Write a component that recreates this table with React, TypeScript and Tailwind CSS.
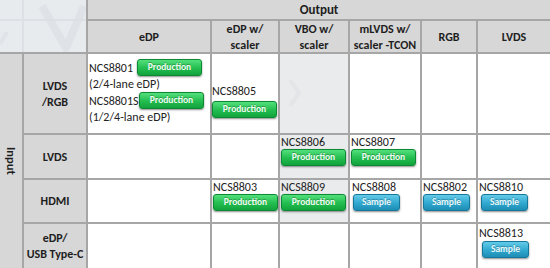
import type { ReactNode } from 'react';

const FONT = { fontFamily: "Carlito, 'Liberation Sans', Arial, sans-serif" };

function Badge({ kind, className = '' }: { kind: 'prod' | 'sample'; className?: string }) {
  const isProd = kind === 'prod';
  return (
    <span
      className={`flex items-center justify-center h-[17px] rounded-[3px] border text-[9.5px] font-bold shadow-[0_1px_2px_rgba(0,0,0,0.45)] [text-shadow:0_-1px_0_rgba(0,0,0,0.25)]
        ${isProd
          ? 'w-[65px] border-[#0b8a33] bg-gradient-to-b from-[#52e07c] via-[#25c052] to-[#12a33d] text-[#f0fdf1]'
          : 'w-[47px] border-[#15789a] bg-gradient-to-b from-[#62cbe8] via-[#33abd2] to-[#1d8db4] text-[#e8f7fb]'
        } ${className}`}
    >
      {isProd ? 'Production' : 'Sample'}
    </span>
  );
}

function Part({ name, kind, pad = 'pl-[1px]', badgePad = '' }: { name: string; kind: 'prod' | 'sample'; pad?: string; badgePad?: string }) {
  return (
    <div className={`flex flex-col ${pad}`}>
      <span className="h-[14px] leading-[14px] text-[12px] text-[#222]">{name}</span>
      <Badge kind={kind} className={badgePad} />
    </div>
  );
}

function Head({ children, className = '' }: { children: ReactNode; className?: string }) {
  return (
    <div className={`bg-[#d7d7d7] flex flex-col items-center justify-center text-center font-bold text-[12px] leading-[16px] text-[#1e1e1e] ${className}`}>
      {children}
    </div>
  );
}

export default function App() {
  return (
    <div className="w-[550px] h-[268px] bg-white overflow-hidden" style={FONT}>
      <div className="grid w-[550px] h-[268px] gap-[2px] bg-[#a6a6a6] grid-cols-[22px_62px_122px_66px_68px_70px_54px_72px] grid-rows-[19px_31px_79px_43px_42px_44px]">
        {/* corner */}
        <div className="relative col-span-2 row-span-2 grid gap-[2px] bg-[#dde1e5] grid-cols-[22px_62px] grid-rows-[19px_31px]">
          <div className="bg-[#e8ebee]" />
          <div className="bg-[#e8ebee]" />
          <div className="bg-[#e8ebee]" />
          <div className="bg-[#e8ebee]" />
          <svg className="absolute inset-0" width="86" height="52" viewBox="0 0 86 52">
            <polyline points="42,6 66,48 84,6" fill="none" stroke="#dce0e6" strokeWidth="8" strokeLinejoin="round" opacity="0.7" />
            <polyline points="0,44 7,32" fill="none" stroke="#e0e4e8" strokeWidth="4" />
          </svg>
        </div>

        <Head className="col-span-6 text-[13px]">Output</Head>

        <Head>eDP</Head>
        <Head><span>eDP w/</span><span>scaler</span></Head>
        <Head><span>VBO w/</span><span>scaler</span></Head>
        <Head className="text-[11.5px]"><span>mLVDS w/</span><span>scaler -TCON</span></Head>
        <Head>RGB</Head>
        <Head>LVDS</Head>

        {/* Input label */}
        <div className="row-span-4 row-start-3 col-start-1 bg-[#d7d7d7] flex items-center justify-center">
          <span className="[writing-mode:vertical-rl] font-bold text-[12.5px] text-[#1e1e1e]">Input</span>
        </div>

        {/* LVDS /RGB */}
        <Head><span>LVDS</span><span>/RGB</span></Head>
        <div className="bg-white flex flex-col pl-[1px] pt-[5px] text-[12px] text-[#222]">
          <div className="flex items-center h-[17px]">
            <span className="w-[48px]">NCS8801</span>
            <Badge kind="prod" />
          </div>
          <div className="h-[16px] leading-[16px]">(2/4-lane eDP)</div>
          <div className="flex items-center h-[17px]">
            <span className="w-[50px]">NCS8801S</span>
            <Badge kind="prod" />
          </div>
          <div className="h-[16px] leading-[16px]">(1/2/4-lane eDP)</div>
        </div>
        <div className="bg-white pt-[28px]">
          <div className="flex flex-col">
            <span className="h-[19px] leading-[19px] text-[12px] text-[#222]">NCS8805</span>
            <Badge kind="prod" className="h-[16px]" />
          </div>
        </div>
        <div className="relative bg-[#e9ebec]">
          <svg className="absolute left-[8px] top-[24px]" width="14" height="30" viewBox="0 0 14 30">
            <polyline points="2,2 11,15 2,28" fill="none" stroke="#e3e5e8" strokeWidth="4" />
          </svg>
        </div>
        <div className="bg-white" />
        <div className="bg-white" />
        <div className="bg-white" />

        {/* LVDS */}
        <Head>LVDS</Head>
        <div className="bg-white" />
        <div className="bg-white" />
        <div className="bg-[#e9ebec]"><Part name="NCS8806" kind="prod" /></div>
        <div className="bg-white"><Part name="NCS8807" kind="prod" /></div>
        <div className="bg-white" />
        <div className="bg-white" />

        {/* HDMI */}
        <Head>HDMI</Head>
        <div className="bg-white" />
        <div className="bg-white"><Part name="NCS8803" kind="prod" /></div>
        <div className="bg-[#e9ebec]"><Part name="NCS8809" kind="prod" /></div>
        <div className="bg-white"><Part name="NCS8808" kind="sample" pad="pl-[2px]" badgePad="ml-[1px]" /></div>
        <div className="bg-white"><Part name="NCS8802" kind="sample" pad="pl-[1px]" /></div>
        <div className="bg-white"><Part name="NCS8810" kind="sample" pad="pl-[1px]" badgePad="ml-[2px]" /></div>

        {/* eDP / USB Type-C */}
        <Head className="text-[11px]"><span>eDP/</span><span>USB Type-C</span></Head>
        <div className="bg-white" />
        <div className="bg-white" />
        <div className="bg-white" />
        <div className="bg-white" />
        <div className="bg-white" />
        <div className="bg-white pt-[2px]">
          <div className="flex flex-col pl-[1px]">
            <span className="h-[15px] leading-[15px] text-[12px] text-[#222]">NCS8813</span>
            <Badge kind="sample" className="ml-[3px]" />
          </div>
        </div>
      </div>
    </div>
  );
}
